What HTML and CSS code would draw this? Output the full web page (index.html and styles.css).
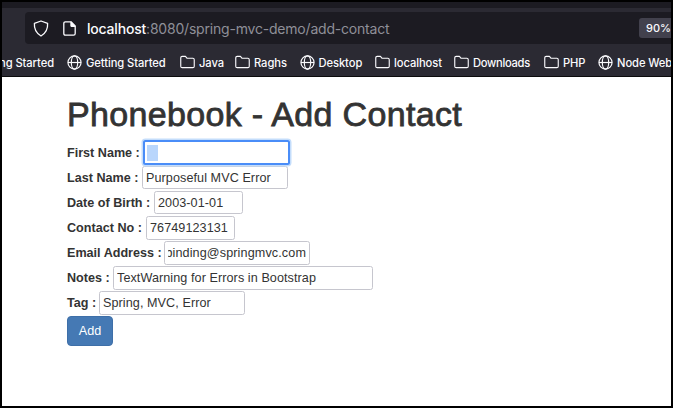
FILE: index.html
```html
<!DOCTYPE html>
<html lang="en">
<head>
<meta charset="utf-8">
<title>Phonebook - Add Contact</title>
<link rel="stylesheet" href="styles.css">
</head>
<body>
<svg width="0" height="0" class="defs">
  <symbol id="globe" viewBox="0 0 16 16"><g fill="none" stroke="currentColor" stroke-width="1.25"><circle cx="8" cy="8" r="7"/><ellipse cx="8" cy="8" rx="3.4" ry="7"/><path d="M1 8h14"/></g></symbol>
  <symbol id="folder" viewBox="0 0 16 16"><path fill="none" stroke="currentColor" stroke-width="1.2" stroke-linejoin="round" d="M2.3 1.5H5.8L7.6 3.5H13.7Q15.2 3.5 15.2 5V12Q15.2 13.5 13.7 13.5H2.3Q.8 13.5.8 12V3Q.8 1.5 2.3 1.5Z"/></symbol>
</svg>
<div class="window">
  <header class="browser">
    <div class="tabs"></div>
    <div class="toolbar">
      <div class="address">
        <svg class="shield" viewBox="0 0 16 17"><path fill="none" stroke="currentColor" stroke-width="1.3" stroke-linejoin="round" d="M8 1L14.6 3.4Q15.2 11.8 8 16Q.8 11.8 1.4 3.4Z"/></svg>
        <svg class="page-icon" viewBox="0 0 13 15"><path fill="none" stroke="currentColor" stroke-width="1.3" stroke-linejoin="round" d="M2.4.8H8L12.2 5V12.6Q12.2 14.2 10.6 14.2H2.4Q.8 14.2.8 12.6V2.4Q.8.8 2.4.8Z"/><path fill="currentColor" d="M7.3.8H8.3L12.4 5V5.9H8.4Q7.3 5.9 7.3 4.8Z"/></svg>
        <span class="url"><b>localhost</b>:8080/spring-mvc-demo/add-contact</span>
        <span class="zoom">90%</span>
      </div>
    </div>
    <nav class="bookmarks">
      <a class="cut"><span>Getting Started</span></a>
      <a class="w-getting"><svg><use href="#globe"/></svg>Getting Started</a>
      <a class="w-java"><svg><use href="#folder"/></svg>Java</a>
      <a class="w-raghs"><svg><use href="#folder"/></svg>Raghs</a>
      <a class="w-desktop"><svg><use href="#globe"/></svg>Desktop</a>
      <a class="w-localhost"><svg><use href="#folder"/></svg>localhost</a>
      <a class="w-downloads"><svg><use href="#folder"/></svg>Downloads</a>
      <a class="w-php"><svg><use href="#folder"/></svg>PHP</a>
      <a><svg><use href="#globe"/></svg>Node Web</a>
    </nav>
  </header>
  <main>
    <h1>Phonebook - Add Contact</h1>
    <form>
      <div class="row"><label class="l-first">First Name :</label><div class="field focused"><span class="selection"></span></div></div>
      <div class="row"><label class="l-last">Last Name :</label><input class="field" value="Purposeful MVC Error"></div>
      <div class="row"><label class="l-birth">Date of Birth :</label><input class="field short" value="2003-01-01"></div>
      <div class="row"><label class="l-contact">Contact No :</label><input class="field short" value="76749123131"></div>
      <div class="row"><label class="l-email">Email Address :</label><div class="field"><div class="scrolled"><span>binding@springmvc.com</span></div></div></div>
      <div class="row"><label class="l-notes">Notes :</label><input class="field long" value="TextWarning for Errors in Bootstrap"></div>
      <div class="row"><label class="l-tag">Tag :</label><input class="field" value="Spring, MVC, Error"></div>
      <button type="button">Add</button>
    </form>
  </main>
</div>
</body>
</html>
```
FILE: styles.css
```css
* { box-sizing: border-box; }
body { margin: 0; background: #000; font-family: "Liberation Sans", Arial, sans-serif; }
.defs { display: block; }
.window { width: 673px; height: 408px; border: 2px solid #000; background: #fff; overflow: hidden; }
.browser { height: 75px; background: #2b2a33; border-bottom: 1px solid #0c0c0d; color: #fbfbfe; font-family: Inter, sans-serif; }
.tabs { height: 6px; background: #1c1b22; }
.toolbar { height: 36px; padding: 4px 0 0 23px; }
.address { display: flex; align-items: center; width: 660px; height: 32px; background: #1c1b22; border-radius: 4px; padding-left: 8px; }
.address > * { flex: none; }
.shield { width: 16px; height: 17px; }
.page-icon { width: 13px; height: 15px; margin-left: 13.5px; }
.url { margin-left: 11.5px; width: 304px; font-size: 14px; letter-spacing: -.2px; color: #8f8f98; white-space: nowrap; }
.url b { font-weight: 500; color: #fbfbfe; }
.zoom { width: 60px; height: 20px; margin-left: 248px; padding-left: 7px; background: #42414d; border-radius: 3px; font-size: 11px; line-height: 20px; font-weight: 500; }
.bookmarks { display: flex; align-items: center; height: 32px; padding-top: 5px; font-size: 11.2px; letter-spacing: -.08px; font-weight: 500; white-space: nowrap; overflow: hidden; }
.bookmarks a { display: flex; flex: none; align-items: center; gap: 4px; }
.bookmarks svg { width: 15px; height: 15px; flex: none; }
.cut { width: 65px; padding-right: 13px; justify-content: flex-end; }
.w-getting { width: 113px; }
.w-java { width: 55px; }
.w-raghs { width: 64.5px; }
.w-desktop { width: 75.5px; }
.w-localhost { width: 79px; }
.w-downloads { width: 90px; letter-spacing: -.3px; }
.w-php { width: 54px; }
main { padding: 18px 65px; color: #333; }
h1 { margin: 0 0 6px; height: 39px; font-size: 34px; line-height: 39px; font-weight: 400; letter-spacing: .33px; -webkit-text-stroke: .8px #333; white-space: nowrap; }
.row { display: flex; align-items: center; height: 25.1px; }
label { flex: none; font-size: 12.6px; font-weight: 700; white-space: nowrap; }
.l-first { width: 76px; }
.l-last { width: 75px; }
.l-birth { width: 87px; }
.l-contact { width: 79px; }
.l-email { width: 97px; }
.l-notes { width: 46px; }
.l-tag { width: 32px; }
.field { width: 146px; height: 23.5px; margin: 0; padding: 0 3px; border: 1px solid #c6c6ce; border-radius: 2.5px; background: #fff; color: #333; font: 12.6px "Liberation Sans", Arial, sans-serif; letter-spacing: .08px; outline: 0; }
.short { width: 89px; }
.long { width: 260px; }
.focused { width: 147px; height: 25px; border: 2px solid #4a8df8; box-shadow: 0 0 0 1.5px #c4ddfb; padding: 2.5px 2px; z-index: 1; }
.selection { display: block; width: 11px; height: 16px; background: #b9d6fc; }
.scrolled { display: flex; justify-content: flex-end; overflow: hidden; line-height: 22px; letter-spacing: .12px; }
button { display: block; margin-top: .5px; width: 46px; height: 30px; padding: 0; border: 1px solid #3e6fa8; border-radius: 4px; background: #4579b4; color: #fff; font: 12.6px "Liberation Sans", Arial, sans-serif; }
```
